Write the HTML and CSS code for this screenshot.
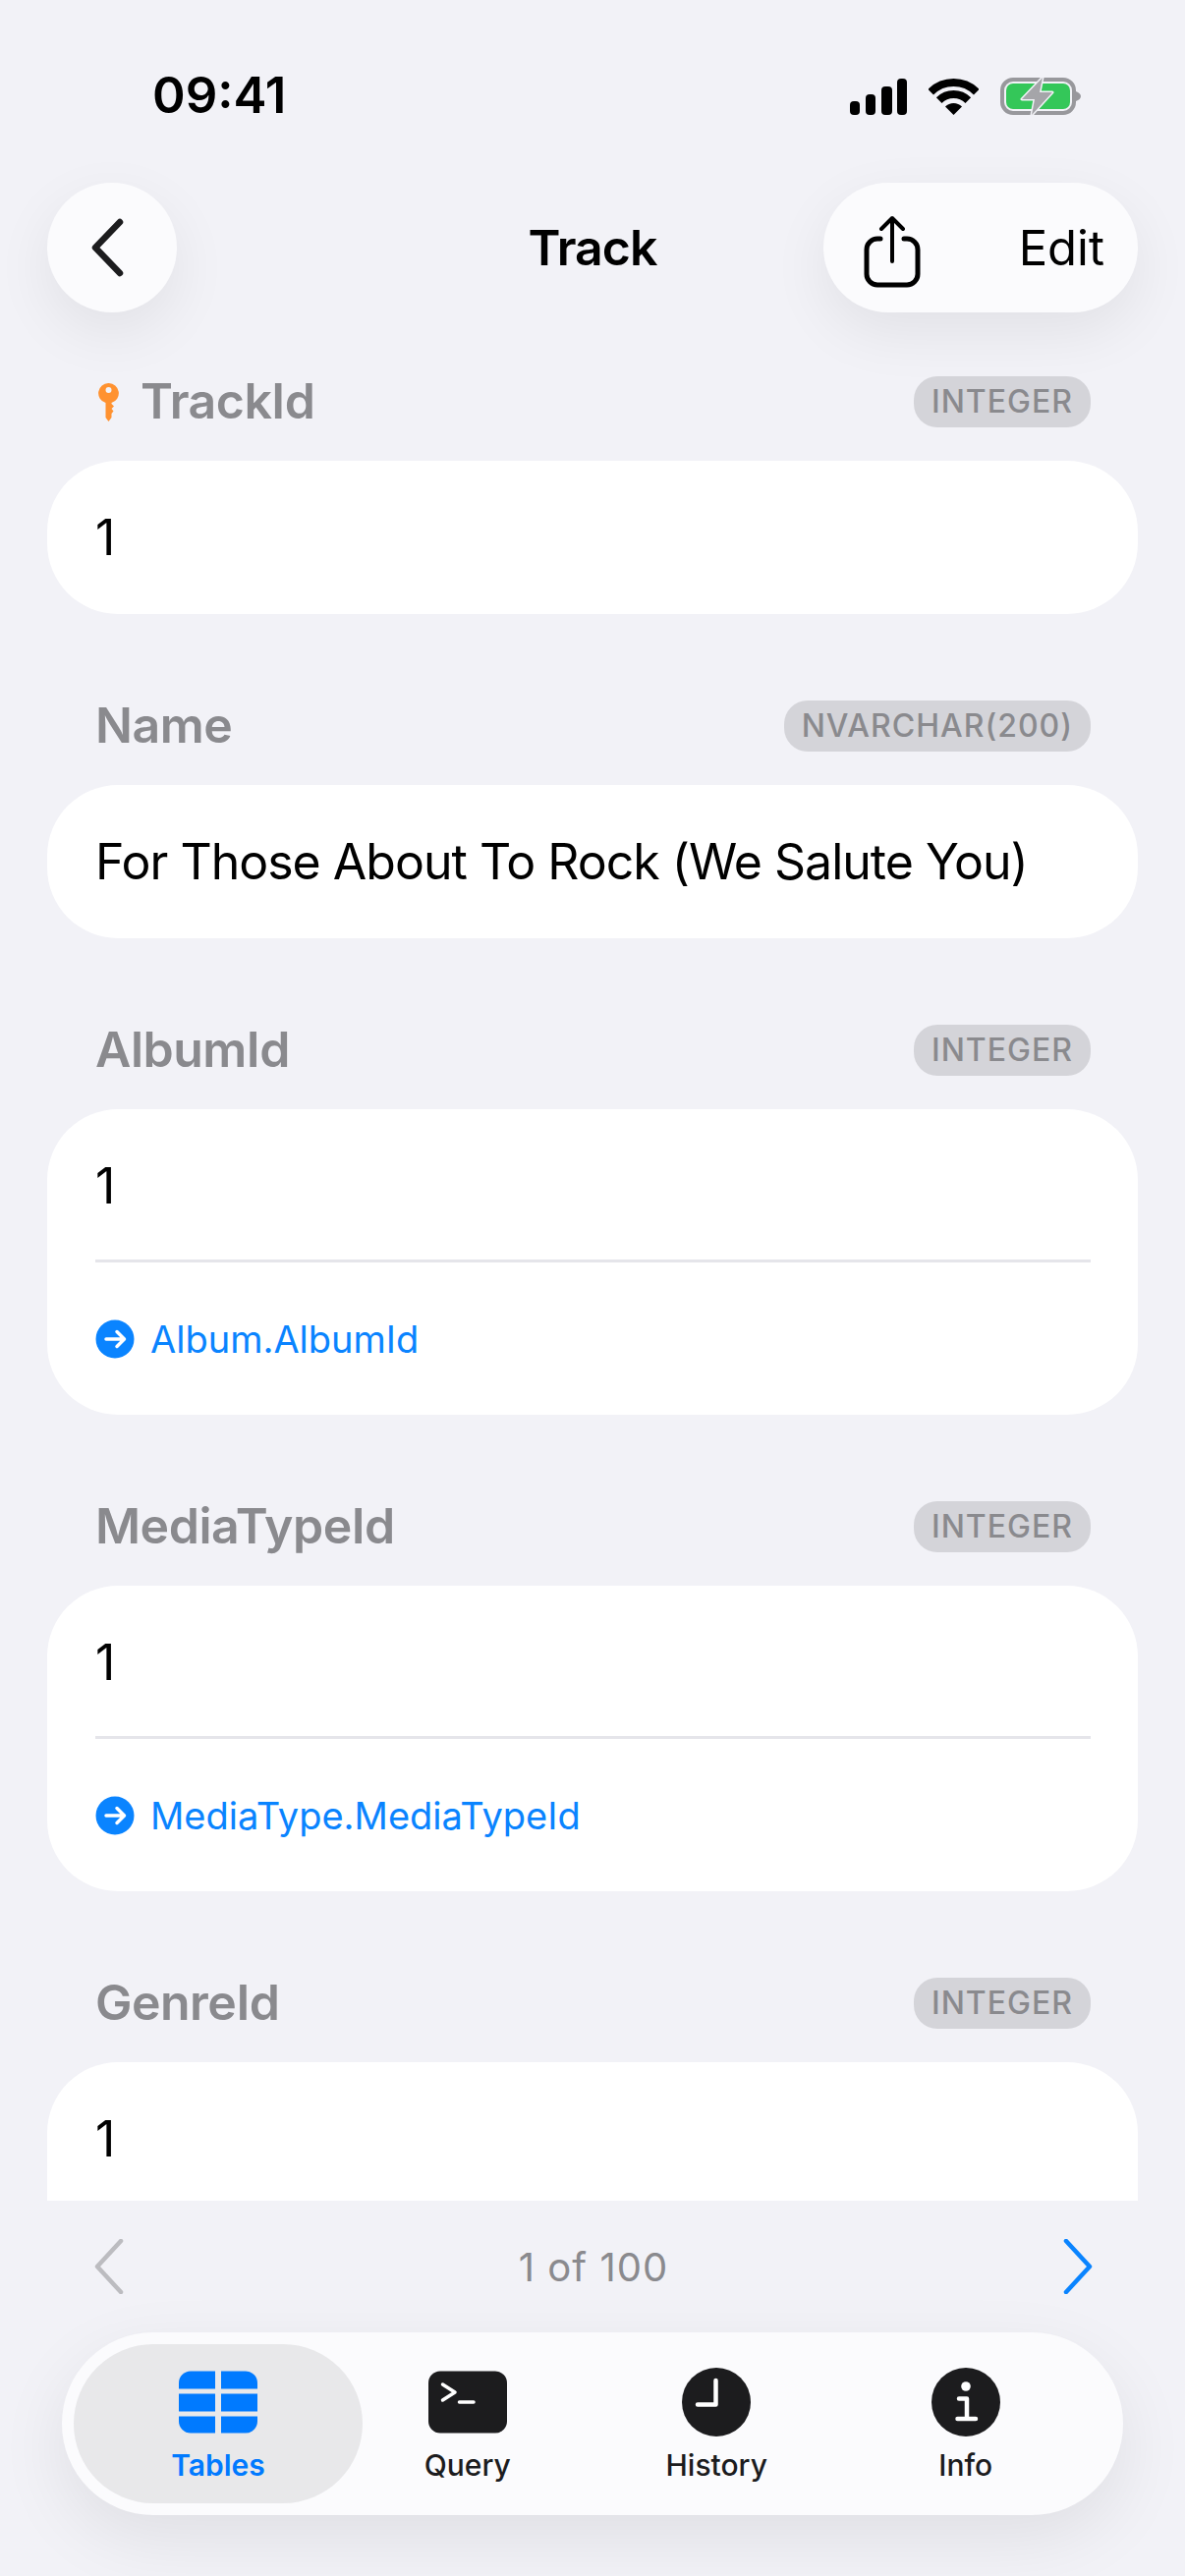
FILE: index.html
```html
<!DOCTYPE html>
<html lang="en">
<head>
    <meta charset="UTF-8">
    <title>Track</title>
    <link rel="stylesheet" href="styles.css">
</head>
<body>
<div class="page">
    <div class="status">
        <div class="clock">09:41</div>
        <div class="status-icons">
            <svg width="58" height="37" viewBox="0 0 58 37" fill="#000">
                <rect x="0" y="23" width="10" height="14" rx="4"/>
                <rect x="16" y="16" width="10" height="21" rx="4"/>
                <rect x="32" y="8" width="11" height="29" rx="4"/>
                <rect x="48" y="0" width="10" height="37" rx="4"/>
            </svg>
            <svg width="51" height="37" viewBox="0 0 51 37">
                <path d="M2.2 13.7A33 33 0 0 1 48.8 13.7M10.7 22.2A21 21 0 0 1 40.3 22.2" fill="none" stroke="#000" stroke-width="8"/>
                <path d="M25.5 37L17 28.5A12 12 0 0 1 34 28.5Z" fill="#000"/>
            </svg>
            <svg width="82" height="39" viewBox="0 0 82 39">
                <rect x="2" y="2" width="73" height="34" rx="11" fill="none" stroke="#98989c" stroke-width="4"/>
                <path d="M77 14V24C80 23 82 21 82 19S80 15 77 14Z" fill="#98989c"/>
                <rect x="6" y="6" width="65" height="26" rx="7" fill="#34c759"/>
                <path d="M43 0L22 22H35L32 38L53 15H40Z" fill="#a5a5a9" stroke="#f2f2f7" stroke-width="3" stroke-linejoin="round" paint-order="stroke"/>
            </svg>
        </div>
    </div>

    <div class="nav">
        <button class="round-btn">
            <svg width="36" height="60" viewBox="0 0 36 60"><path d="M31 4L6 30L31 56" fill="none" stroke="#1c1c1e" stroke-width="6.5" stroke-linecap="round" stroke-linejoin="round"/></svg>
        </button>
        <div class="nav-title">Track</div>
        <div class="pill-btn">
            <svg class="share" width="58" height="74" viewBox="0 0 58 74" fill="none" stroke="#000" stroke-width="5" stroke-linecap="round" stroke-linejoin="round">
                <path d="M17 24H14A11 11 0 0 0 3 35V60A11 11 0 0 0 14 71H44A11 11 0 0 0 55 60V35A11 11 0 0 0 44 24H41"/>
                <path d="M29 47V3M18 14L29 3L40 14" stroke-width="4"/>
            </svg>
            <span>Edit</span>
        </div>
    </div>

    <div class="content">
        <div class="field">
            <div class="field-head">
                <div class="field-name">
                    <svg class="key" width="21" height="39" viewBox="0 0 21 39" fill="#ff9230">
                        <path fill-rule="evenodd" d="M10.5 0A10.2 10.2 0 0 1 13.5 20V21L16 23.5L13.5 26L15.5 28.5L13.5 31V35L10.5 39L7.5 35V20A10.2 10.2 0 0 1 10.5 0ZM10.5 4A3 3 0 1 0 10.5 10A3 3 0 1 0 10.5 4Z"/>
                    </svg>
                    TrackId
                </div>
                <div class="badge">INTEGER</div>
            </div>
            <div class="card"><div class="value">1</div></div>
        </div>

        <div class="field">
            <div class="field-head">
                <div class="field-name">Name</div>
                <div class="badge">NVARCHAR(200)</div>
            </div>
            <div class="card"><div class="value">For Those About To Rock (We Salute You)</div></div>
        </div>

        <div class="field">
            <div class="field-head">
                <div class="field-name">AlbumId</div>
                <div class="badge">INTEGER</div>
            </div>
            <div class="card">
                <div class="value with-line">1</div>
                <div class="link">
                    <svg width="40" height="40" viewBox="0 0 40 40"><circle cx="20" cy="20" r="19.5" fill="#0a84ff"/><path d="M11 20H29M22 12.5L29.5 20L22 27.5" fill="none" stroke="#fff" stroke-width="3.5" stroke-linecap="round" stroke-linejoin="round"/></svg>
                    Album.AlbumId
                </div>
            </div>
        </div>

        <div class="field">
            <div class="field-head">
                <div class="field-name">MediaTypeId</div>
                <div class="badge">INTEGER</div>
            </div>
            <div class="card">
                <div class="value with-line">1</div>
                <div class="link">
                    <svg width="40" height="40" viewBox="0 0 40 40"><circle cx="20" cy="20" r="19.5" fill="#0a84ff"/><path d="M11 20H29M22 12.5L29.5 20L22 27.5" fill="none" stroke="#fff" stroke-width="3.5" stroke-linecap="round" stroke-linejoin="round"/></svg>
                    MediaType.MediaTypeId
                </div>
            </div>
        </div>

        <div class="field">
            <div class="field-head">
                <div class="field-name">GenreId</div>
                <div class="badge">INTEGER</div>
            </div>
            <div class="card">
                <div class="value with-line">1</div>
                <div class="link"></div>
            </div>
        </div>
    </div>

    <div class="pager">
        <svg width="30" height="56" viewBox="0 0 30 56"><path d="M27 2L3 28L27 54" fill="none" stroke="#bcbcc0" stroke-width="4.5" stroke-linecap="round" stroke-linejoin="round"/></svg>
        <div class="pager-text">1 of 100</div>
        <svg width="30" height="56" viewBox="0 0 30 56"><path d="M3 2L27 28L3 54" fill="none" stroke="#0a84ff" stroke-width="4.5" stroke-linecap="round" stroke-linejoin="round"/></svg>
    </div>

    <div class="tabbar">
        <div class="tab active">
            <svg width="80" height="70" viewBox="0 -3.5 80 70" fill="#007aff">
                <path d="M0 18V12A12 12 0 0 1 12 0H37V18Z"/>
                <path d="M43 0H68A12 12 0 0 1 80 12V18H43Z"/>
                <rect x="0" y="23" width="37" height="18"/>
                <rect x="43" y="23" width="37" height="18"/>
                <path d="M0 46H37V63H12A12 12 0 0 1 0 51Z"/>
                <path d="M43 46H80V51A12 12 0 0 1 68 63H43Z"/>
            </svg>
            <span>Tables</span>
        </div>
        <div class="tab">
            <svg width="80" height="70" viewBox="0 -3.5 80 70">
                <rect width="80" height="63" rx="12" fill="#1c1c1e"/>
                <path d="M14.5 13.5L27 21.5L14.5 29.5M31.5 31.5H46" fill="none" stroke="#fff" stroke-width="3.5" stroke-linecap="round" stroke-linejoin="round"/>
            </svg>
            <span>Query</span>
        </div>
        <div class="tab">
            <svg width="70" height="70" viewBox="0 0 70 70">
                <circle cx="35" cy="35" r="35" fill="#1c1c1e"/>
                <path d="M34.5 13V37.5H16" fill="none" stroke="#fff" stroke-width="4.5" stroke-linecap="round" stroke-linejoin="round"/>
            </svg>
            <span>History</span>
        </div>
        <div class="tab">
            <svg width="70" height="70" viewBox="0 0 70 70">
                <circle cx="35" cy="35" r="35" fill="#1c1c1e"/>
                <circle cx="35" cy="19" r="4.8" fill="#fff"/>
                <path d="M28 31.5H36V52M26.5 52H45" fill="none" stroke="#fff" stroke-width="4.5" stroke-linecap="round" stroke-linejoin="round"/>
            </svg>
            <span>Info</span>
        </div>
    </div>
</div>
</body>
</html>
```
FILE: styles.css
```css
*{
    margin: 0;
    padding: 0;
    box-sizing: border-box;
}
body{
    background-color: #f2f2f7;
    font-family: Inter, "Liberation Sans", sans-serif;
    color: #000;
}
.page{
    display: flex;
    flex-direction: column;
    width: 1206px;
    height: 2622px;
    overflow: hidden;
}
.status{
    display: flex;
    justify-content: space-between;
    align-items: center;
    height: 186px;
    padding: 10px 106px 0 155px;
}
.clock{
    padding-bottom: 3px;
    font-size: 51px;
    font-weight: 600;
}
.status-icons{
    display: flex;
    align-items: center;
    gap: 22px;
}
.nav{
    display: grid;
    grid-template-columns: 320px 1fr 320px;
    align-items: center;
    height: 132px;
    padding: 0 48px;
    position: relative;
    z-index: 2;
}
.round-btn{
    display: flex;
    justify-content: center;
    align-items: center;
    width: 132px;
    height: 132px;
    padding-right: 11px;
    border: none;
    border-radius: 50%;
    background-color: #fbfbfd;
    box-shadow: 0 20px 60px rgba(0, 0, 0, 0.07);
}
.nav-title{
    text-align: center;
    font-size: 50px;
    font-weight: 600;
    letter-spacing: -1px;
}
.pill-btn{
    display: flex;
    justify-content: space-between;
    align-items: center;
    height: 132px;
    padding: 0 34px 0 41px;
    border-radius: 66px;
    background-color: #fbfbfd;
    box-shadow: 0 20px 60px rgba(0, 0, 0, 0.07);
    font-size: 49px;
}
.share{
    margin-top: 8px;
}
.content{
    flex: 1;
    min-height: 0;
    padding: 65px 48px 0;
    overflow: hidden;
}
.field{
    margin-bottom: 88px;
}
.field-head{
    display: flex;
    justify-content: space-between;
    align-items: center;
    height: 52px;
    margin-bottom: 34px;
    padding: 0 48px 0 49px;
}
.field-name{
    display: flex;
    align-items: center;
    padding-bottom: 2px;
    font-size: 50px;
    font-weight: 600;
    letter-spacing: -0.5px;
    color: #8a8a8e;
}
.key{
    margin: 2px 22px 0 3px;
}
.badge{
    height: 52px;
    padding: 0 18px;
    border-radius: 24px;
    background-color: #d4d4d9;
    font-size: 32px;
    font-weight: 500;
    line-height: 52px;
    letter-spacing: 1px;
    color: #8a8a8e;
}
.card{
    border-radius: 72px;
    background-color: #fff;
    padding: 0 48px 0 49px;
}
.value{
    height: 156px;
    font-size: 50px;
    line-height: 156px;
    letter-spacing: -1px;
}
.with-line{
    border-bottom: 3px solid #e5e5ea;
}
.link{
    display: flex;
    align-items: center;
    height: 155px;
    gap: 16px;
    font-size: 38px;
    color: #0a84ff;
}
.pager{
    display: flex;
    flex-shrink: 0;
    justify-content: space-between;
    align-items: center;
    height: 134px;
    padding: 0 94px 0 96px;
}
.pager-text{
    font-size: 40px;
    letter-spacing: 1px;
    color: #8a8a8e;
}
.tabbar{
    display: flex;
    flex-shrink: 0;
    width: 1080px;
    height: 186px;
    margin: 0 0 62px 63px;
    padding: 12px;
    border-radius: 93px;
    background-color: #fbfbfd;
    box-shadow: 0 24px 70px rgba(0, 0, 0, 0.08);
}
.tab{
    display: flex;
    flex-direction: column;
    align-items: center;
    width: 253.5px;
    padding-top: 24px;
    font-size: 30px;
    font-weight: 500;
    color: #1c1c1e;
}
.tab span{
    margin-top: 11px;
}
.tab.active{
    width: 294px;
    margin-right: -20px;
    border-radius: 81px;
    background-color: #e8e8ea;
    font-weight: 600;
    color: #007aff;
}
```
